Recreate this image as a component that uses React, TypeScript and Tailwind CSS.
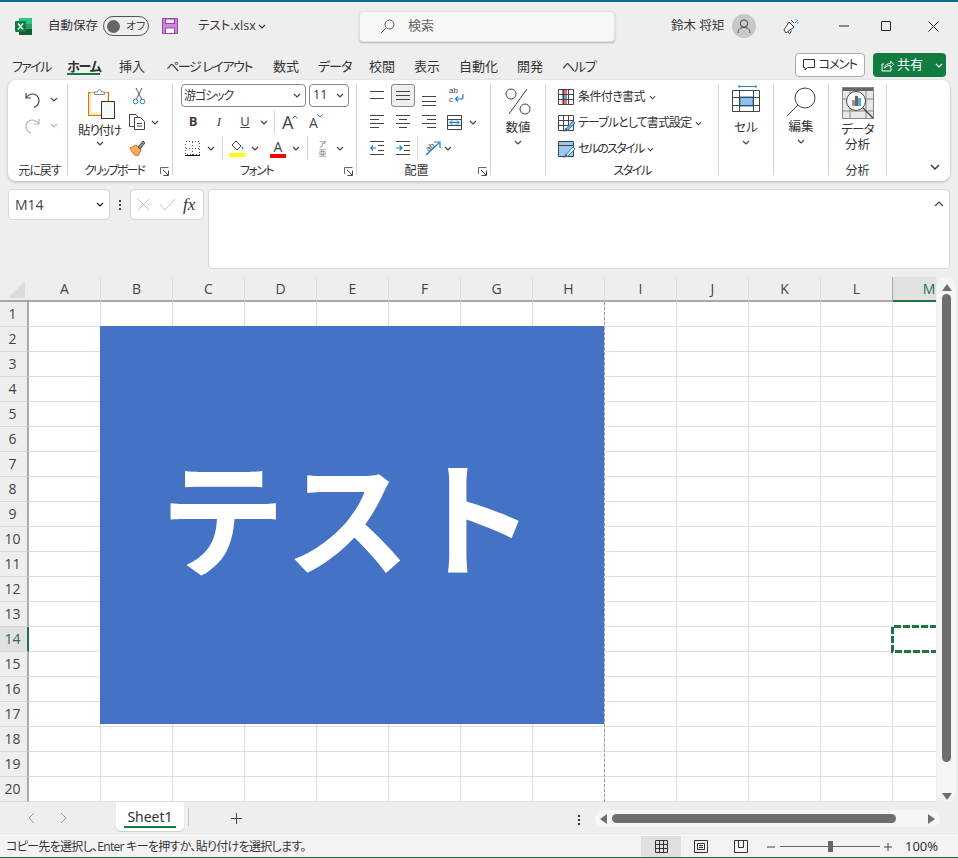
import React from "react";

const columns = ["A", "B", "C", "D", "E", "F", "G", "H", "I", "J", "K", "L", "M"];
const rows = Array.from({ length: 20 }, (_, i) => i + 1);

const tabs = [
  { label: "ファイル", cls: "w-[67px] pl-[12px] tracking-[-1.6px]" },
  { label: "ホーム", cls: "w-[52px] font-bold tracking-[-1.2px]" },
  { label: "挿入", cls: "w-[47px]" },
  { label: "ページ レイアウト", cls: "w-[107px] tracking-[-1.4px]" },
  { label: "数式", cls: "w-[45px]" },
  { label: "データ", cls: "w-[51px] tracking-[-1px]" },
  { label: "校閲", cls: "w-[45px]" },
  { label: "表示", cls: "w-[45px]" },
  { label: "自動化", cls: "w-[58px]" },
  { label: "開発", cls: "w-[45px]" },
  { label: "ヘルプ", cls: "w-[40px] tracking-[-1.2px]" },
];

function Chev({ color = "#444", size = 8 }: { color?: string; size?: number }) {
  return (
    <svg width={size} height={5} viewBox="0 0 8 5" className="shrink-0">
      <path d="M1 1l3 3 3-3" fill="none" stroke={color} strokeWidth="1.2" />
    </svg>
  );
}

function Launcher() {
  return (
    <svg width={9} height={9} viewBox="0 0 9 9" className="shrink-0">
      <path d="M.5 7V.5h8M.5.5" fill="none" stroke="#666" />
      <path d="M8.5 3.5v5h-5M3 3l5 5" fill="none" stroke="#444" />
    </svg>
  );
}

function Lines({ ys, x1 = 0, x2 = 14, h = 16 }: { ys: number[]; x1?: number; x2?: number; h?: number }) {
  return (
    <svg width={14} height={h} viewBox={`0 0 14 ${h}`} className="shrink-0">
      {ys.map((y) => (
        <path key={y} d={`M${x1} ${y}.5H${x2}`} stroke="#444" />
      ))}
    </svg>
  );
}

function HAlign({ side }: { side: "l" | "c" | "r" }) {
  const short = side === "l" ? "M0 5.5H9M0 13.5H9" : side === "c" ? "M3 5.5H11M3 13.5H11" : "M5 5.5H14M5 13.5H14";
  return (
    <svg width={14} height={16} viewBox="0 0 14 16" className="shrink-0">
      <path d="M0 1.5H14M0 9.5H14" stroke="#444" />
      <path d={short} stroke="#444" />
    </svg>
  );
}

function Indent({ out }: { out?: boolean }) {
  return (
    <svg width={14} height={14} viewBox="0 0 14 14" className="shrink-0">
      <path d="M0 .5H14M0 13.5H14M8 4.5H14M8 9.5H14" stroke="#444" />
      <path d={out ? "M6 7H1M3 4.5L.8 7 3 9.5" : "M0 7H5.5M3.5 4.5L6 7 3.5 9.5"} fill="none" stroke="#1e7fc8" strokeWidth="1.2" />
    </svg>
  );
}

function MiniTable({ kind }: { kind: "cond" | "table" | "cell" }) {
  return (
    <svg width={17} height={17} viewBox="0 0 17 17" className="shrink-0">
      {kind === "cond" && (
        <g>
          <rect x="4" y="1" width="5" height="4" fill="#f06a6a" />
          <rect x="4" y="5" width="5" height="6" fill="#5aa7e0" />
          <rect x="4" y="11" width="5" height="4" fill="#f06a6a" />
        </g>
      )}
      {kind === "cell" && <rect x="1" y="1" width="15" height="14" fill="#9cc9ee" />}
      <path d="M.5.5h15v15H.5z" fill="none" stroke="#444" />
      {kind === "cell" ? (
        <path d="M.5 4.5h15" stroke="#444" />
      ) : (
        <path d="M.5 5.5h15M.5 10.5h15M5.5.5v15M10.5.5v15" stroke="#444" />
      )}
      {kind !== "cond" && (
        <g>
          <path d="M7 15l8-9 2 2-8 8z" fill={kind === "table" ? "#7db8e8" : "#eef6fc"} stroke="#1e7fc8" />
          <path d="M4 16c2 0 3-1 3.500-3l2 1c-.5 2-3 3-5.500 2z" fill="#555" />
        </g>
      )}
    </svg>
  );
}

function Group({
  w,
  label,
  labelCls = "",
  launcher,
  children,
}: {
  w: string;
  label?: string;
  labelCls?: string;
  launcher?: boolean;
  children: React.ReactNode;
}) {
  return (
    <div className={`${w} h-[91px] shrink-0 border-r border-[#d4d4d4] flex flex-col relative`}>
      <div className="h-[79px] shrink-0">{children}</div>
      {label && <div className={`h-[16px] shrink-0 leading-[16px] text-center text-[12px] text-[#333] ${labelCls}`}>{label}</div>}
      {launcher && (
        <div className="absolute right-[3px] top-[83px] flex">
          <Launcher />
        </div>
      )}
    </div>
  );
}

function BigButton({ icon, label, topCls }: { icon: React.ReactNode; label: string; topCls: string }) {
  return (
    <div className="flex flex-col items-center">
      <div className={`${topCls} flex justify-center items-start`}>{icon}</div>
      <div className="text-[12.5px] leading-[16px] text-[#333] mt-[1px]">{label}</div>
      <div className="mt-[4px] flex">
        <Chev />
      </div>
    </div>
  );
}

function Divider({ cls }: { cls: string }) {
  return <div className={`w-px h-[24px] bg-[#d4d4d4] shrink-0 ${cls}`} />;
}

function TitleBar() {
  return (
    <div className="h-[48px] flex items-center text-[12px] text-[#333] shrink-0">
      <svg width={18} height={17} viewBox="0 0 18 17" className="ml-[15px] shrink-0">
        <rect x="4" y="0" width="13" height="17" rx="1" fill="#21a366" />
        <rect x="4" y="0" width="13" height="6" fill="#33c481" />
        <rect x="4" y="11" width="13" height="6" fill="#185c37" />
        <rect x="0" y="3" width="11" height="11" rx="1" fill="#107c41" />
        <path d="M3 5.500l5 6M8 5.500l-5 6" stroke="#fff" strokeWidth="1.400" />
      </svg>
      <span className="ml-[15px] w-[55px] text-[12.5px]">自動保存</span>
      <div className="w-[46px] h-[20px] rounded-full border border-[#555] flex items-center pl-[3px] shrink-0">
        <span className="w-[13px] h-[13px] rounded-full bg-[#666]" />
        <span className="ml-[6px] text-[11px] text-[#444]">オフ</span>
      </div>
      <svg width={16} height={16} viewBox="0 0 16 16" className="ml-[13px] shrink-0">
        <path d="M.5.500h15v15H.5z" fill="#c98ad6" stroke="#9f3fb3" />
        <rect x="3.500" y="1" width="9" height="4.500" fill="#f6e9f8" stroke="#9f3fb3" />
        <rect x="3.500" y="10" width="9" height="5.500" fill="#fff" stroke="#9f3fb3" />
      </svg>
      <span className="ml-[20px] w-[60px] text-[12.5px]">テスト.xlsx</span>
      <span className="ml-[0px] flex">
        <Chev color="#333" />
      </span>
      <div className="ml-[93px] w-[256px] h-[31px] bg-[#f7f7f7] rounded-[4px] border border-[#e2e2e2] shadow-[0_1px_2px_rgba(0,0,0,0.25)] flex items-center pl-[20px] shrink-0">
        <svg width={15} height={15} viewBox="0 0 15 15" className="shrink-0">
          <circle cx="9.500" cy="5.500" r="4.500" fill="none" stroke="#555" />
          <path d="M6 9l-5 5" stroke="#555" />
        </svg>
        <span className="ml-[13px] text-[13px] text-[#666]">検索</span>
      </div>
      <span className="ml-[56px] w-[61px] text-[12.500px]">鈴木 将矩</span>
      <div className="w-[24px] h-[24px] rounded-full bg-[#c8c8c8] flex items-center justify-center shrink-0">
        <svg width={14} height={15} viewBox="0 0 14 15">
          <circle cx="7" cy="4.500" r="3.700" fill="none" stroke="#444" />
          <path d="M1 14c0-4 2.500-5.500 6-5.500s6 1.500 6 5.500" fill="none" stroke="#444" />
        </svg>
      </div>
      <svg width={17} height={17} viewBox="0 0 17 17" className="ml-[27px] shrink-0">
        <path d="M1 12l5-8 5 5-8 6z" fill="#fff" stroke="#444" />
        <path d="M5 14l2 1.500 1.500-3M8 2l3 3" fill="none" stroke="#444" />
        <path d="M12 5l3-3M13 1v1M15.500 5H14" stroke="#1e7fc8" />
      </svg>
      <svg width={14} height={2} viewBox="0 0 14 2" className="ml-[37px] shrink-0">
        <path d="M2 1h10" stroke="#222" />
      </svg>
      <div className="ml-[30px] w-[10px] h-[10px] rounded-[1px] border border-[#222] shrink-0" />
      <svg width={11} height={11} viewBox="0 0 11 11" className="ml-[37px] shrink-0">
        <path d="M.5.500l10 10M10.500.500l-10 10" stroke="#222" />
      </svg>
    </div>
  );
}

function TabRow() {
  return (
    <div className="h-[30px] flex shrink-0 text-[13px] text-[#333]">
      {tabs.map((t) => (
        <div key={t.label} className={`${t.cls} h-[26px] pt-[7px] shrink-0 whitespace-nowrap relative`}>
          {t.label}
          {t.label === "ホーム" && <div className="absolute left-0 top-[23px] w-[33px] h-[2px] bg-[#107c41]" />}
        </div>
      ))}
      <div className="ml-[193px] mt-[3px] w-[70px] h-[24px] bg-white border border-[#aaa] rounded-[4px] flex items-center justify-center gap-[3px] shrink-0 text-[12.5px] tracking-[-1.300px]">
        <svg width={12} height={12} viewBox="0 0 12 12">
          <path d="M.5.500h11v8H4.500L2 11V8.500H.5z" fill="none" stroke="#333" />
        </svg>
        コメント
      </div>
      <div className="ml-[8px] mt-[3px] w-[73px] h-[24px] bg-[#107c41] rounded-[4px] flex items-center pl-[8px] shrink-0 text-white">
        <svg width={13} height={13} viewBox="0 0 13 13">
          <path d="M3 5H1v7h9V9M3.500 9c.5-3 3-4.500 6-4.500V2l3 3.500-3 3V6.500c-2.500 0-4.500 1-6 2.500z" fill="none" stroke="#fff" />
        </svg>
        <span className="ml-[3px]">共有</span>
        <span className="ml-[12px] flex">
          <Chev color="#fff" />
        </span>
      </div>
    </div>
  );
}

function Ribbon() {
  return (
    <div className="mx-[8px] h-[101px] bg-white rounded-[8px] shadow-[0_1px_3px_rgba(0,0,0,0.25)] flex pt-[4px] shrink-0 text-[#333]">
      <Group w="w-[60px]" label="元に戻す" labelCls="pl-[4px] tracking-[-1px]">
        <div className="flex items-center pl-[17px] pt-[3px] h-[28px]">
          <svg width={15} height={16} viewBox="0 0 15 16">
            <path d="M1 1v5h5M1 6c2-3 4-4 7-4 3 0 6 3 6 6.500 0 3-2 5.500-5 7" fill="none" stroke="#444" strokeWidth="1.200" />
          </svg>
          <span className="ml-[10px] flex">
            <Chev />
          </span>
        </div>
        <div className="flex items-center pl-[17px] pt-[1px] h-[26px]">
          <svg width={15} height={16} viewBox="0 0 15 16">
            <path d="M14 1v5H9M14 6c-2-3-4-4-7-4-3 0-6 3-6 6.500 0 3 2 5.500 5 7" fill="none" stroke="#b5b5b5" strokeWidth="1.200" />
          </svg>
          <span className="ml-[10px] flex">
            <Chev color="#bbb" />
          </span>
        </div>
      </Group>
      <Group w="w-[105px]" label="クリップボード" labelCls="pr-[12px] tracking-[-2px]" launcher>
        <div className="flex">
          <div className="w-[57px] ml-[3px] flex flex-col items-center shrink-0">
            <svg width={28} height={30} viewBox="0 0 28 30" className="mt-[5px] ml-[4px]">
              <path d="M.5 3.500h20v23H.5z" fill="#fde9c4" stroke="#d9730d" strokeWidth="1.200" />
              <path d="M3 3.500h16v20H3z" fill="#fff" />
              <path d="M6.500 5.500V3h3c0-3 4-3 4 0h3v2.500z" fill="#fff" stroke="#888" />
              <rect x="13.500" y="12.500" width="13" height="17" fill="#f7f7f7" stroke="#333" />
            </svg>
            <div className="text-[12.500px] leading-[16px] mt-[4px] whitespace-nowrap tracking-[-1.200px]">貼り付け</div>
            <div className="flex mt-[2px] ml-[1px]">
              <Chev />
            </div>
          </div>
          <div className="ml-[1px] flex flex-col">
            <svg width={12} height={17} viewBox="0 0 12 17" className="mt-[4px] ml-[4px]">
              <path d="M3 0l5.500 11M9 0L3.500 11" stroke="#555" />
              <circle cx="2.500" cy="13.500" r="2.300" fill="none" stroke="#1e7fc8" />
              <circle cx="9.500" cy="13.500" r="2.300" fill="none" stroke="#1e7fc8" />
            </svg>
            <div className="flex items-center mt-[9px]">
              <svg width={17} height={16} viewBox="0 0 17 16" className="shrink-0">
                <path d="M6 12.500H.5V.5H7L9 3" fill="#fff" stroke="#444" />
                <path d="M5.500 3.500h6l4 4v8h-10z" fill="#fff" stroke="#444" />
                <path d="M8 9.500h5M8 12h5" stroke="#444" />
              </svg>
              <span className="ml-[5px] flex">
                <Chev />
              </span>
            </div>
            <svg width={17} height={16} viewBox="0 0 17 16" className="mt-[10px]">
              <path d="M1 8l6-3 5 5-3 6c-2 0-4-1-5-3s-3-3-3-5z" fill="#f6ad5e" stroke="#d9730d" />
              <path d="M9 7l5-6 2 2-5 6z" fill="#888" stroke="#555" />
            </svg>
          </div>
        </div>
      </Group>
      <Group w="w-[184px]" label="フォント" labelCls="pr-[16px] tracking-[-1.500px]" launcher>
        <div className="flex pl-[8px]">
          <div className="w-[125px] h-[23px] border border-[#888] rounded-[4px] flex items-center justify-between pl-[2px] pr-[4px] text-[12px] tracking-[-1.100px]">
            游ゴシック
            <Chev />
          </div>
          <div className="ml-[3px] w-[40px] h-[23px] border border-[#888] rounded-[4px] flex items-center justify-between pl-[3px] pr-[4px] text-[12.500px]">
            11
            <Chev />
          </div>
        </div>
        <div className="flex items-center pl-[7px] mt-[3px] h-[24px] text-[#444]">
          <span className="w-[26px] text-center text-[13px] font-bold">B</span>
          <span className="w-[26px] text-center text-[13px] italic font-['Liberation_Serif',serif]">I</span>
          <span className="w-[26px] text-center text-[13px] underline">U</span>
          <span className="w-[12px] flex justify-center">
            <Chev />
          </span>
          <Divider cls="ml-[4px]" />
          <span className="ml-[7px] w-[17px] flex items-start">
            <span className="text-[18px] leading-[20px]">A</span>
            <svg width={6} height={4} viewBox="0 0 6 4" className="shrink-0 mt-[3px] ml-[-1px]">
              <path d="M.5 3.500L3 1l2.500 2.500" fill="none" stroke="#1e7fc8" />
            </svg>
          </span>
          <span className="ml-[10px] w-[14px] flex items-start">
            <span className="text-[14px] leading-[20px] mt-[2px]">A</span>
            <svg width={6} height={4} viewBox="0 0 6 4" className="shrink-0 mt-[3px] ml-[-1px]">
              <path d="M.5.500L3 3l2.500-2.500" fill="none" stroke="#1e7fc8" />
            </svg>
          </span>
        </div>
        <div className="flex items-center pl-[12px] mt-[2px] h-[24px]">
          <svg width={15} height={15} viewBox="0 0 15 15" className="shrink-0" shapeRendering="crispEdges">
            <path d="M.5.500h14v13H.5zM7.500.500v13M.5 7h14" fill="none" stroke="#555" strokeDasharray="1 2" />
            <path d="M0 14.500h15" stroke="#111" />
          </svg>
          <span className="ml-[7px] flex">
            <Chev />
          </span>
          <Divider cls="ml-[7px]" />
          <svg width={16} height={17} viewBox="0 0 16 17" className="ml-[6px] shrink-0">
            <path d="M7 1l5 5-4 4-5-5z" fill="#fff" stroke="#444" />
            <path d="M13 7l1 2" stroke="#1e7fc8" strokeWidth="1.500" />
            <rect x="0" y="13" width="16" height="4" fill="#ffff00" />
          </svg>
          <span className="ml-[6px] flex">
            <Chev />
          </span>
          <span className="ml-[11px] w-[16px] flex flex-col items-center shrink-0">
            <span className="text-[14px] leading-[15px] text-[#444]">A</span>
            <span className="w-[16px] h-[4px] bg-[#ff0000]" />
          </span>
          <span className="ml-[6px] flex">
            <Chev />
          </span>
          <Divider cls="ml-[7px]" />
          <div className="ml-[10px] w-[9px] flex flex-col items-center shrink-0 text-[8px] text-[#777]">
            <div className="h-[9px] leading-[9px]">ア</div>
            <div className="h-[9px] leading-[9px]">亜</div>
          </div>
          <span className="ml-[9px] flex">
            <Chev />
          </span>
        </div>
      </Group>
      <Group w="w-[134px]" label="配置" labelCls="pr-[14px]" launcher>
        <div className="flex items-center pl-[13px] h-[23px]">
          <Lines ys={[3, 10]} />
          <div className="ml-[7px] w-[24px] h-[23px] bg-[#eeeeee] border border-[#888] rounded-[3px] flex items-center justify-center shrink-0">
            <Lines ys={[3, 7, 11]} />
          </div>
          <span className="ml-[7px] mt-[8px] flex">
            <Lines ys={[4, 9, 13]} />
          </span>
          <svg width={15} height={19} viewBox="0 0 15 19" className="ml-[13px] shrink-0">
            <text x="0" y="7" fontSize="8" fill="#444" fontFamily="Liberation Sans">ab</text>
            <text x="0" y="16" fontSize="8" fill="#444" fontFamily="Liberation Sans">c</text>
            <path d="M14 8v3c0 1.500-1 2-2 2H7M9 10.500L6.500 13 9 15.500" fill="none" stroke="#1e7fc8" strokeWidth="1.200" />
          </svg>
        </div>
        <div className="flex items-center pl-[13px] mt-[3px] h-[24px]">
          <HAlign side="l" />
          <span className="ml-[12px] flex">
            <HAlign side="c" />
          </span>
          <span className="ml-[12px] flex">
            <HAlign side="r" />
          </span>
          <svg width={15} height={15} viewBox="0 0 15 15" className="ml-[11px] shrink-0">
            <path d="M.5.500h14v14H.5zM.5 4.500h14M.5 10.500h14" fill="none" stroke="#444" />
            <rect x="1" y="5" width="13" height="5" fill="#d6eafa" />
            <path d="M3 7.500h9M5 5.500l-2 2 2 2M10 5.500l2 2-2 2" fill="none" stroke="#1e7fc8" />
          </svg>
          <span className="ml-[7px] flex">
            <Chev />
          </span>
        </div>
        <div className="flex items-center pl-[13px] mt-[2px] h-[24px]">
          <Indent out />
          <span className="ml-[12px] flex">
            <Indent />
          </span>
          <Divider cls="ml-[7px]" />
          <svg width={17} height={16} viewBox="0 0 17 16" className="ml-[6px] shrink-0">
            <text x="2" y="10" fontSize="8" fill="#444" fontFamily="Liberation Sans" transform="rotate(-40 6 8)">ab</text>
            <path d="M2 15L15 3M10 2h6v6" fill="none" stroke="#1e7fc8" strokeWidth="1.200" />
          </svg>
          <span className="ml-[3px] flex">
            <Chev />
          </span>
        </div>
      </Group>
      <Group w="w-[55px]">
        <BigButton
          topCls="h-[31px] mt-[4px] text-[#444]"
          label="数値"
          icon={
            <svg width={26} height={27} viewBox="0 0 26 27">
              <circle cx="6" cy="6" r="5" fill="none" stroke="#444" />
              <circle cx="20" cy="21" r="5" fill="none" stroke="#444" />
              <path d="M22 1L4 26" stroke="#444" />
            </svg>
          }
        />
      </Group>
      <Group w="w-[173px]" label="スタイル" labelCls="tracking-[-1.500px]">
        <div className="pl-[12px] flex flex-col text-[12px]">
          <div className="h-[26px] flex items-center gap-[3px]">
            <MiniTable kind="cond" />
            <span className="whitespace-nowrap tracking-[-0.600px]">条件付き書式</span>
            <span className="ml-[1px] flex">
              <Chev size={7} />
            </span>
          </div>
          <div className="h-[26px] flex items-center gap-[3px]">
            <MiniTable kind="table" />
            <span className="whitespace-nowrap tracking-[-0.900px]">テーブルとして書式設定</span>
            <span className="ml-[1px] flex">
              <Chev size={7} />
            </span>
          </div>
          <div className="h-[26px] flex items-center gap-[3px]">
            <MiniTable kind="cell" />
            <span className="whitespace-nowrap tracking-[-1.700px]">セルのスタイル</span>
            <span className="ml-[1px] flex">
              <Chev size={7} />
            </span>
          </div>
        </div>
      </Group>
      <Group w="w-[55px]">
        <BigButton
          topCls="h-[34px] mt-[1px]"
          label="セル"
          icon={
            <svg width={29} height={28} viewBox="0 0 29 28">
              <path d="M7 1.500h17M7 0v3M24 0v3" fill="none" stroke="#1e7fc8" />
              <rect x="8" y="12" width="13" height="9" fill="#8cc0ee" stroke="#1e7fc8" />
              <path d="M.5 5.500h27v21H.5zM.5 12.500h27M.5 20.500h27M7.500 5.500v21M21.500 5.500v21" fill="none" stroke="#444" />
            </svg>
          }
        />
      </Group>
      <Group w="w-[55px]">
        <BigButton
          topCls="h-[31px] mt-[3px]"
          label="編集"
          icon={
            <svg width={30} height={30} viewBox="0 0 30 30">
              <circle cx="19" cy="11" r="10" fill="none" stroke="#444" />
              <path d="M12 18L1 29" stroke="#444" />
            </svg>
          }
        />
      </Group>
      <Group w="w-[58px]" label="分析">
        <div className="flex flex-col items-center">
          <svg width={32} height={32} viewBox="0 0 32 32" className="mt-[3px]">
            <rect x="0" y="0" width="32" height="32" fill="#e8e8e8" />
            <rect x="0" y="0" width="32" height="4" fill="#666" />
            <path d="M.5.500h31v31H.5zM.5 12h31M.5 24h31M8 4v28M24 4v28" fill="none" stroke="#888" />
            <circle cx="14" cy="14" r="9.500" fill="#fff" stroke="#444" />
            <path d="M21 21l10 10" stroke="#444" strokeWidth="1.200" />
            <rect x="10" y="13" width="3" height="6" fill="#999" />
            <rect x="13" y="9" width="3" height="10" fill="#666" />
            <rect x="16" y="11" width="3" height="8" fill="#5aa7e0" />
          </svg>
          <div className="text-[12.500px] text-center mt-[3px]">
            <div className="h-[15px] leading-[15px] tracking-[-0.800px]">データ</div>
            <div className="h-[15px] leading-[15px]">分析</div>
          </div>
        </div>
      </Group>
      <div className="flex-1 flex items-end justify-end pr-[10px] pb-[11px]">
        <svg width={10} height={6} viewBox="0 0 10 6">
          <path d="M1 1l4 4 4-4" fill="none" stroke="#333" strokeWidth="1.400" />
        </svg>
      </div>
    </div>
  );
}

function FormulaBar() {
  return (
    <div className="flex mt-[8px] mx-[8px] h-[80px] shrink-0">
      <div className="w-[102px] h-[31px] bg-white border border-[#d8d8d8] rounded-[4px] flex items-center justify-between pl-[6px] pr-[5px] text-[14px] text-[#444] shrink-0">
        M14
        <Chev color="#222" />
      </div>
      <div className="w-[20px] h-[31px] flex flex-col items-center justify-center gap-[2px] shrink-0">
        <span className="w-[2px] h-[2px] bg-[#444]" />
        <span className="w-[2px] h-[2px] bg-[#444]" />
        <span className="w-[2px] h-[2px] bg-[#444]" />
      </div>
      <div className="w-[74px] h-[31px] bg-white border border-[#d8d8d8] rounded-[4px] flex items-center pl-[6px] shrink-0">
        <svg width={13} height={13} viewBox="0 0 13 13">
          <path d="M.5.500l12 12M12.500.500l-12 12" stroke="#c4c4c4" />
        </svg>
        <svg width={17} height={13} viewBox="0 0 17 13" className="ml-[9px]">
          <path d="M1 6l5 6L16 1" fill="none" stroke="#c4c4c4" />
        </svg>
        <span className="ml-[7px] text-[17px] italic font-['Liberation_Serif',serif] text-[#333]">fx</span>
      </div>
      <div className="ml-[4px] flex-1 h-[80px] bg-white border border-[#d8d8d8] rounded-[4px] flex justify-end pt-[11px] pr-[5px]">
        <svg width={10} height={6} viewBox="0 0 10 6">
          <path d="M1 5l4-4 4 4" fill="none" stroke="#444" strokeWidth="1.200" />
        </svg>
      </div>
    </div>
  );
}

function Sheet() {
  return (
    <div className="relative w-[936px] h-[525px] overflow-hidden shrink-0 bg-white">
      <div className="flex h-[25px]">
        <div className="w-[29px] h-[25px] bg-[#eeeeee] border-b-2 border-[#a8a8a8] flex items-start pl-[8px] pt-[4px] shrink-0">
          <svg width={17} height={17} viewBox="0 0 18 18">
            <path d="M18 0v18H0z" fill="#dcdcdc" />
          </svg>
        </div>
        {columns.map((c) => (
          <div
            key={c}
            className={
              c === "M"
                ? "w-[72px] shrink-0 bg-[#e1e1e1] border-b-2 border-b-[#217346] text-center text-[14px] leading-[23px] text-[#217346]"
                : c === "L"
                  ? "w-[72px] shrink-0 bg-[#eeeeee] border-b-2 border-b-[#a8a8a8] border-r border-r-[#a8a8a8] text-center text-[14px] leading-[23px] text-[#444]"
                  : "w-[72px] shrink-0 bg-[#eeeeee] border-b-2 border-b-[#a8a8a8] border-r border-r-[#dedede] text-center text-[14px] leading-[23px] text-[#444]"
            }
          >
            {c}
          </div>
        ))}
      </div>
      {rows.map((r) => (
        <div key={r} className="flex h-[25px]">
          <div
            className={
              r === 14
                ? "w-[29px] shrink-0 bg-[#e1e1e1] border-r-2 border-r-[#217346] border-b border-b-[#d8d8d8] text-center text-[14px] leading-[24px] text-[#217346] pr-[2px]"
                : "w-[29px] shrink-0 bg-[#eeeeee] border-r-2 border-r-[#a8a8a8] border-b border-b-[#d8d8d8] text-center text-[14px] leading-[24px] text-[#444] pr-[2px]"
            }
          >
            {r}
          </div>
          {columns.map((c) => (
            <div key={c} className="w-[72px] shrink-0 border-r border-b border-[#dedede]" />
          ))}
        </div>
      ))}
      {/* floating picture + copy marks */}
      <div className="absolute left-[100px] top-[49px] w-[504px] h-[398px] bg-[#4472c4] flex items-center justify-center">
        <span className="text-white text-[125px] leading-none font-bold whitespace-nowrap mt-[-14px] ml-[-9px] [font-feature-settings:normal]">テスト</span>
      </div>
      <div className="absolute left-[604px] top-[25px] h-[500px] border-l border-dashed border-[#9a9a9a]" />
      <svg width={45} height={28} viewBox="0 0 45 28" className="absolute left-[891px] top-[348px]">
        <path d="M46 1.500H1.500v25H46" fill="none" stroke="#217346" strokeWidth="3" strokeDasharray="7 2" />
      </svg>
    </div>
  );
}

function VScroll() {
  return (
    <div className="w-[19px] h-[525px] ml-[1px] bg-[#f5f5f5] rounded-full flex flex-col items-center shrink-0">
      <svg width={10} height={7} viewBox="0 0 10 7" className="mt-[7px] shrink-0">
        <path d="M5 0l5 7H0z" fill="#6e6e6e" />
      </svg>
      <div className="w-[9px] h-[468px] mt-[3px] rounded-full bg-[#6e6e6e] shrink-0" />
      <svg width={10} height={7} viewBox="0 0 10 7" className="mt-[31px] shrink-0">
        <path d="M5 7l5-7H0z" fill="#6e6e6e" />
      </svg>
    </div>
  );
}

function TabBar() {
  return (
    <div className="h-[33px] flex shrink-0 text-[#333]">
      <svg width={8} height={12} viewBox="0 0 8 12" className="ml-[27px] mt-[10px] shrink-0">
        <path d="M7 1L2 6l5 5" fill="none" stroke="#999" />
      </svg>
      <svg width={8} height={12} viewBox="0 0 8 12" className="ml-[25px] mt-[10px] shrink-0">
        <path d="M1 1l5 5-5 5" fill="none" stroke="#999" />
      </svg>
      <div className="ml-[48px] w-[68px] h-[29px] bg-white rounded-b-[5px] shadow-[0_1px_1px_rgba(0,0,0,0.15)] flex flex-col items-center shrink-0">
        <span className="text-[14px] leading-[18px] mt-[6px] font-['Noto_Sans',sans-serif]">Sheet1</span>
        <span className="w-[52px] h-[2px] bg-[#107c41] mt-[0px]" />
      </div>
      <div className="ml-[4px] mt-[6px] w-px h-[18px] bg-[#c4c4c4] shrink-0" />
      <svg width={11} height={11} viewBox="0 0 11 11" className="ml-[42px] mt-[11px] shrink-0">
        <path d="M5.500 0v11M0 5.500h11" stroke="#444" />
      </svg>
      <div className="ml-[336px] mt-[13px] h-[10px] w-[2px] flex flex-col justify-between shrink-0">
        <span className="h-[2px] bg-[#333]" />
        <span className="h-[2px] bg-[#333]" />
        <span className="h-[2px] bg-[#333]" />
      </div>
      <div className="ml-[15px] mt-[8px] w-[345px] h-[17px] rounded-full bg-[#f6f6f6] flex items-center shrink-0">
        <svg width={7} height={10} viewBox="0 0 7 10" className="ml-[5px] shrink-0">
          <path d="M0 5l7-5v10z" fill="#6e6e6e" />
        </svg>
        <div className="ml-[5px] w-[284px] h-[9px] rounded-full bg-[#6e6e6e] shrink-0" />
        <svg width={7} height={10} viewBox="0 0 7 10" className="ml-[32px] shrink-0">
          <path d="M7 5L0 0v10z" fill="#6e6e6e" />
        </svg>
      </div>
    </div>
  );
}

function StatusBar() {
  return (
    <div className="h-[23px] bg-[#f3f3f3] border-t border-[#fafafa] border-b border-b-[#217346] flex items-center text-[12px] text-[#333] shrink-0">
      <span className="ml-[6px] w-[635px] whitespace-nowrap text-[12px] tracking-[-0.700px]">コピー先を選択し、Enter キーを押すか、貼り付けを選択します。</span>
      <div className="w-[40px] h-full bg-[#e0e0e0] flex items-center justify-center shrink-0">
        <svg width={13} height={13} viewBox="0 0 13 13">
          <path d="M.5.500h12v12H.5zM.5 4.500h12M.5 8.500h12M4.500.500v12M8.500.500v12" fill="none" stroke="#333" />
        </svg>
      </div>
      <svg width={14} height={13} viewBox="0 0 14 13" className="ml-[13px] shrink-0">
        <path d="M.5.500h13v12H.5zM3.500 3.500h7v6h-7zM5 5.500h4M5 7.500h4" fill="none" stroke="#333" />
      </svg>
      <svg width={14} height={13} viewBox="0 0 14 13" className="ml-[26px] shrink-0">
        <path d="M.5.500h13v12H.5zM4.500.500v7h5v-7" fill="none" stroke="#333" />
      </svg>
      <svg width={8} height={2} viewBox="0 0 8 2" className="ml-[19px] shrink-0">
        <path d="M0 1h8" stroke="#444" />
      </svg>
      <div className="ml-[5px] w-[100px] h-[1px] bg-[#666] flex items-center justify-center shrink-0">
        <span className="w-[5px] h-[11px] bg-[#666]" />
      </div>
      <svg width={8} height={8} viewBox="0 0 8 8" className="ml-[4px] shrink-0">
        <path d="M4 0v8M0 4h8" stroke="#444" />
      </svg>
      <span className="ml-[13px] text-[13px] font-['Noto_Sans',sans-serif]">100%</span>
    </div>
  );
}

export default function App() {
  return (
    <div className="w-[958px] h-[858px] overflow-hidden bg-[#eeeeee] flex flex-col font-['Open_Sans','Noto_Sans_CJK_JP',sans-serif] [font-feature-settings:'palt']">
      <div className="h-[2px] bg-[#0b6a8a] shrink-0" />
      <TitleBar />
      <TabRow />
      <Ribbon />
      <FormulaBar />
      <div className="flex mt-[8px] shrink-0">
        <Sheet />
        <VScroll />
      </div>
      <TabBar />
      <StatusBar />
    </div>
  );
}
